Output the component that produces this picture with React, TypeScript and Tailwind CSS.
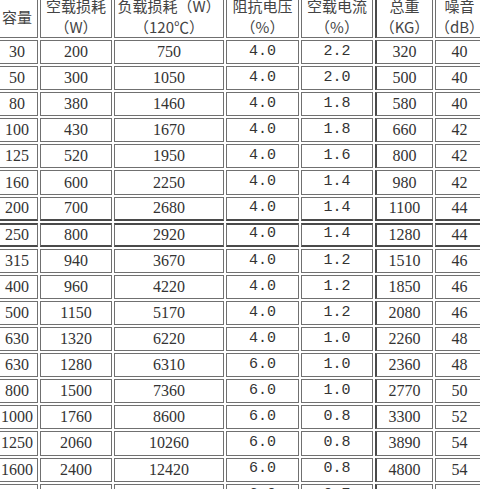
import React from "react";

const header: [string, string | null][] = [
  ["容量", null],
  ["空载损耗", "（W）"],
  ["负载损耗（W）", "（120℃）"],
  ["阻抗电压", "（%）"],
  ["空载电流", "（%）"],
  ["总重", "（KG）"],
  ["噪音", "（dB）"],
];

const rows: string[][] = [
  ["30", "200", "750", "4.0", "2.2", "320", "40"],
  ["50", "300", "1050", "4.0", "2.0", "500", "40"],
  ["80", "380", "1460", "4.0", "1.8", "580", "40"],
  ["100", "430", "1670", "4.0", "1.8", "660", "42"],
  ["125", "520", "1950", "4.0", "1.6", "800", "42"],
  ["160", "600", "2250", "4.0", "1.4", "980", "42"],
  ["200", "700", "2680", "4.0", "1.4", "1100", "44"],
  ["250", "800", "2920", "4.0", "1.4", "1280", "44"],
  ["315", "940", "3670", "4.0", "1.2", "1510", "46"],
  ["400", "960", "4220", "4.0", "1.2", "1850", "46"],
  ["500", "1150", "5170", "4.0", "1.2", "2080", "46"],
  ["630", "1320", "6220", "4.0", "1.0", "2260", "48"],
  ["630", "1280", "6310", "6.0", "1.0", "2360", "48"],
  ["800", "1500", "7360", "6.0", "1.0", "2770", "50"],
  ["1000", "1760", "8600", "6.0", "0.8", "3300", "52"],
  ["1250", "2060", "10260", "6.0", "0.8", "3890", "54"],
  ["1600", "2400", "12420", "6.0", "0.8", "4800", "54"],
  ["2000", "2880", "14850", "6.0", "0.7", "5600", "56"],
];

function cellBorder(col: number, row: number) {
  const base = "border border-[#707070]";
  const left = col === 5 ? " border-l-2 border-l-[#4a4a4a]" : "";
  const thick =
    row === 7 ? " border-y-2 border-y-[#4a4a4a]" : row === 6 ? " border-b-2 border-b-[#4a4a4a]" : "";
  return base + left + thick;
}

export default function App() {
  return (
    <div className="w-[480px] h-[489px] overflow-hidden bg-white">
      <div className="grid grid-cols-[42px_72px_110px_73px_72px_58px_49px] gap-[2px] -ml-[4px] -mt-[6px] w-max text-[#333333]">
        {header.map(([a, b], i) => (
          <div
            key={"h" + i}
            className={
              "h-[44px] flex flex-col items-center justify-center text-[15px] leading-[21px] whitespace-nowrap " +
              cellBorder(i, -1)
            }
            style={{ fontFamily: '"Noto Sans CJK SC", "Noto Sans", sans-serif' }}
          >
            <span className="text-[#444444]">{a}</span>
            {b && <span className="text-[#444444]">{b}</span>}
          </div>
        ))}
        {rows.map((r, ri) =>
          r.map((v, ci) => {
            const mono = ci === 3 || ci === 4;
            return (
              <div
                key={ri + "-" + ci}
                className={
                  "h-[24.1px] flex items-center justify-center whitespace-nowrap " +
                  (mono
                    ? "font-['Liberation_Mono',monospace] text-[15px] "
                    : "font-['Liberation_Serif',serif] text-[16px] ") +
                  cellBorder(ci, ri)
                }
              >
                {v}
              </div>
            );
          })
        )}
      </div>
    </div>
  );
}
